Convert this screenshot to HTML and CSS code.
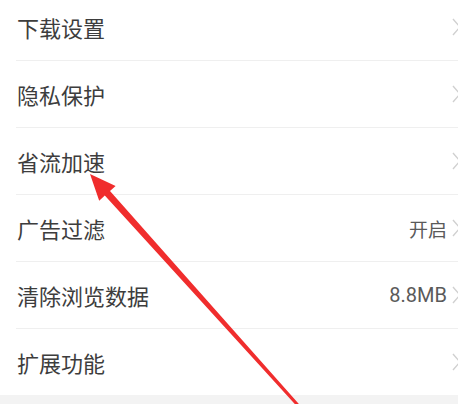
FILE: index.html
```html
<!DOCTYPE html>
<html lang="zh-CN">
<head>
<meta charset="utf-8">
<link rel="stylesheet" href="styles.css">
</head>
<body>
<div class="page">
  <ul class="list">
    <li class="row"><span class="label">下载设置</span><span class="right"><svg class="chev" viewBox="0 0 9 18" width="9" height="18"><path d="M1 1 L8 9 L1 17" /></svg></span></li>
    <li class="row"><span class="label">隐私保护</span><span class="right"><svg class="chev" viewBox="0 0 9 18" width="9" height="18"><path d="M1 1 L8 9 L1 17" /></svg></span></li>
    <li class="row"><span class="label">省流加速</span><span class="right"><svg class="chev" viewBox="0 0 9 18" width="9" height="18"><path d="M1 1 L8 9 L1 17" /></svg></span></li>
    <li class="row"><span class="label">广告过滤</span><span class="right"><span class="value">开启</span><svg class="chev" viewBox="0 0 9 18" width="9" height="18"><path d="M1 1 L8 9 L1 17" /></svg></span></li>
    <li class="row"><span class="label">清除浏览数据</span><span class="right"><span class="value num">8.8MB</span><svg class="chev" viewBox="0 0 9 18" width="9" height="18"><path d="M1 1 L8 9 L1 17" /></svg></span></li>
    <li class="row last"><span class="label">扩展功能</span><span class="right"><svg class="chev" viewBox="0 0 9 18" width="9" height="18"><path d="M1 1 L8 9 L1 17" /></svg></span></li>
  </ul>
  <svg class="arrow" viewBox="0 0 458 404" width="458" height="404">
    <polygon points="90,174 115.6,185.9 110.0,191.0 301.1,406.5 298.9,408.5 104.8,195.6 99.2,200.7" />
  </svg>
</div>
</body>
</html>
```

FILE: styles.css
```css
html, body {
  margin: 0;
  padding: 0;
  background: #f3f3f3;
  width: 458px;
  height: 404px;
  overflow: hidden;
}

.page {
  position: relative;
  width: 458px;
  height: 404px;
  overflow: hidden;
  font-family: "Noto Sans CJK SC", "Noto Sans", sans-serif;
}

.list {
  list-style: none;
  margin: -6px 0 0 0;
  padding: 0 0 0 16px;
  background: #ffffff;
}

.row {
  display: flex;
  align-items: center;
  justify-content: space-between;
  height: 66px;
  border-bottom: 1px solid #efefef;
  padding-left: 1px;
}

.row.last {
  border-bottom: none;
}

.label {
  font-size: 22px;
  color: #3d3d3d;
  letter-spacing: 0;
}

.right {
  display: flex;
  align-items: center;
  gap: 5px;
  margin-right: -3px;
}

.value {
  font-size: 19px;
  color: #5a5a5a;
}

.value.num {
  font-family: Roboto, "Noto Sans", sans-serif;
  font-size: 20px;
}

.chev {
  display: block;
  fill: none;
  stroke: #d0d0d0;
  stroke-width: 1.4;
}

.arrow {
  position: absolute;
  left: 0;
  top: 0;
  pointer-events: none;
}

.arrow polygon {
  fill: #f02d2d;
}
```
